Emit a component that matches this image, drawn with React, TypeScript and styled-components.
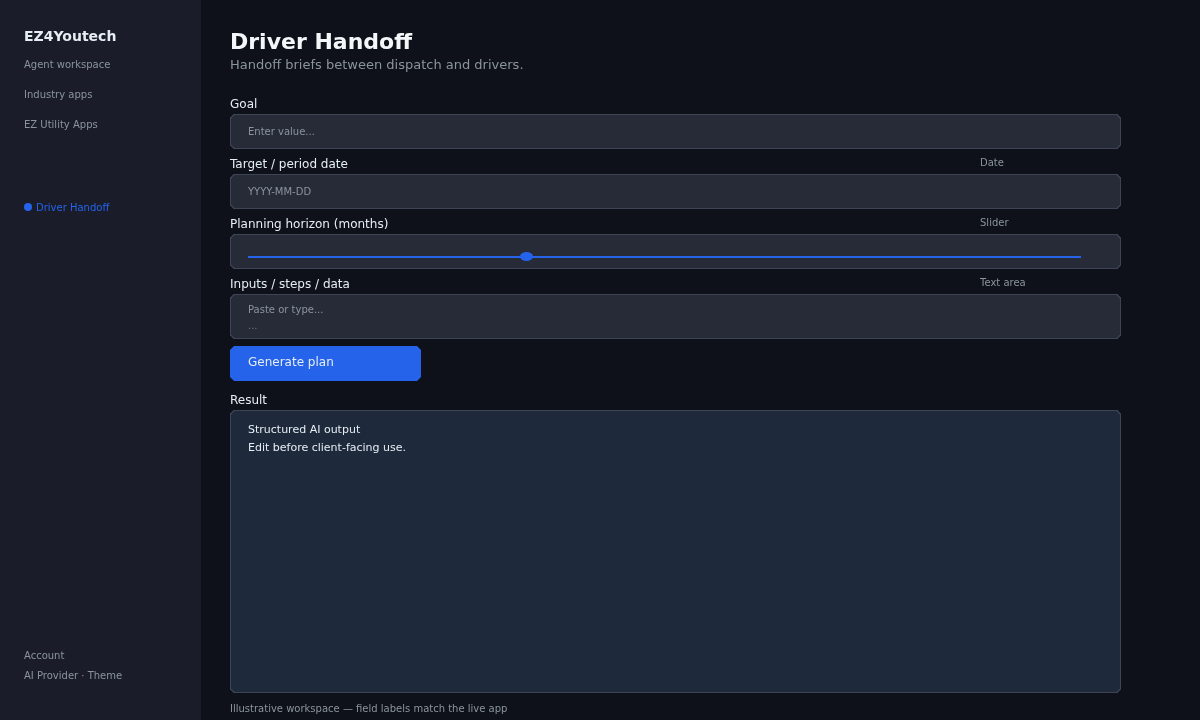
import React from "react";
import styled, { createGlobalStyle } from "styled-components";

const GlobalStyle = createGlobalStyle`
  html, body, #root {
    margin: 0;
    height: 100%;
  }
  body {
    background: #0e1119;
    font-family: "DejaVu Sans", sans-serif;
    overflow: hidden;
  }
`;

const fields = [
  { label: "Goal", placeholder: "Enter value..." },
  { label: "Target / period date", hint: "Date", placeholder: "YYYY-MM-DD" },
];

const App = () => {
  return (
    <Shell>
      <GlobalStyle />
      <Sidebar>
        <Brand>EZ4Youtech</Brand>
        <NavList>
          <NavItem>Agent workspace</NavItem>
          <NavItem>Industry apps</NavItem>
          <NavItem>EZ Utility Apps</NavItem>
        </NavList>
        <ActiveItem>
          <Dot />
          Driver Handoff
        </ActiveItem>
        <SidebarFooter>
          <span>Account</span>
          <span>AI Provider · Theme</span>
        </SidebarFooter>
      </Sidebar>
      <Main>
        <Title>Driver Handoff</Title>
        <Subtitle>Handoff briefs between dispatch and drivers.</Subtitle>
        <Form>
          {fields.map((f) => (
            <Field key={f.label}>
              <LabelRow>
                <Label>{f.label}</Label>
                {f.hint && <Hint>{f.hint}</Hint>}
              </LabelRow>
              <InputBox>{f.placeholder}</InputBox>
            </Field>
          ))}
          <Field>
            <LabelRow>
              <Label>Planning horizon (months)</Label>
              <Hint>Slider</Hint>
            </LabelRow>
            <SliderBox>
              <Track>
                <Thumb />
              </Track>
            </SliderBox>
          </Field>
          <Field>
            <LabelRow>
              <Label>Inputs / steps / data</Label>
              <Hint>Text area</Hint>
            </LabelRow>
            <TextBox>
              <span>Paste or type...</span>
              <Faint>...</Faint>
            </TextBox>
          </Field>
        </Form>
        <GenerateButton>Generate plan</GenerateButton>
        <ResultLabel>Result</ResultLabel>
        <ResultBox>
          <span>Structured AI output</span>
          <span>Edit before client-facing use.</span>
        </ResultBox>
        <Footnote>Illustrative workspace — field labels match the live app</Footnote>
      </Main>
    </Shell>
  );
};

export default App;

const Shell = styled.div`
  display: flex;
  width: 1200px;
  height: 720px;
  background: #0e1119;
  will-change: transform;
`;

const Sidebar = styled.aside`
  display: flex;
  flex-direction: column;
  flex: 0 0 201px;
  box-sizing: border-box;
  padding: 28px 0 38px 24px;
  background: #1a1d29;
  color: #8b949e;
  font-size: 10px;
`;

const Brand = styled.div`
  height: 16px;
  line-height: 17px;
  color: #e6edf3;
  font-size: 14px;
  font-weight: 700;
`;

const NavList = styled.nav`
  display: flex;
  flex-direction: column;
  gap: 18px;
  margin-top: 15px;
`;

const NavItem = styled.div`
  height: 12px;
  line-height: 12px;
`;

const ActiveItem = styled.div`
  display: flex;
  align-items: center;
  gap: 4px;
  height: 12px;
  margin-top: 70px;
  color: #2563eb;
`;

const Dot = styled.i`
  width: 8px;
  height: 8px;
  border-radius: 50%;
  background: #2563eb;
`;

const SidebarFooter = styled.div`
  display: flex;
  flex-direction: column;
  gap: 8px;
  margin-top: auto;
  line-height: 12px;
`;

const Main = styled.main`
  display: flex;
  flex-direction: column;
  flex: 1;
  box-sizing: border-box;
  padding: 29px 79px 0 29px;
`;

const Title = styled.h1`
  margin: 0;
  height: 26px;
  line-height: 26px;
  color: #f4f7fa;
  font-size: 22px;
  font-weight: 700;
`;

const Subtitle = styled.p`
  margin: 2px 0 0;
  height: 16px;
  line-height: 16px;
  color: #8b949e;
  font-size: 13px;
`;

const Form = styled.div`
  display: flex;
  flex-direction: column;
  gap: 5px;
  margin-top: 21px;
`;

const Field = styled.div`
  display: flex;
  flex-direction: column;
`;

const LabelRow = styled.div`
  display: flex;
  align-items: flex-start;
  justify-content: space-between;
  height: 20px;
`;

const Label = styled.label`
  line-height: 21px;
  color: #e6edf3;
  font-size: 12px;
`;

const Hint = styled.span`
  flex: 0 0 141px;
  line-height: 18px;
  color: #8b949e;
  font-size: 10px;
`;

const InputBox = styled.div`
  box-sizing: border-box;
  height: 35px;
  padding: 0 17px;
  border: 1px solid #3d4454;
  border-radius: 4px;
  corner-shape: bevel;
  background: #272b37;
  color: #8b949e;
  font-size: 10px;
  line-height: 33px;
`;

const SliderBox = styled(InputBox)`
  padding: 21px 39px 0 17px;
`;

const Track = styled.div`
  position: relative;
  height: 2px;
  background: #2563eb;
`;

const Thumb = styled.span`
  position: absolute;
  top: -4px;
  left: 272px;
  width: 13px;
  height: 9px;
  border-radius: 50%;
  background: #2563eb;
`;

const TextBox = styled(InputBox)`
  display: flex;
  flex-direction: column;
  gap: 4px;
  height: 45px;
  padding-top: 9px;
  line-height: 12px;
`;

const Faint = styled.span`
  color: #6b7280;
`;

const GenerateButton = styled.button`
  width: 191px;
  height: 35px;
  margin-top: 7px;
  padding: 0 18px 3px;
  border: 0;
  border-radius: 4px;
  corner-shape: bevel;
  background: #2563eb;
  color: #e6edf3;
  font-family: inherit;
  font-size: 12px;
  text-align: left;
`;

const ResultLabel = styled(Label)`
  display: block;
  height: 20px;
  margin-top: 9px;
`;

const ResultBox = styled.div`
  display: flex;
  flex-direction: column;
  gap: 6px;
  box-sizing: border-box;
  height: 283px;
  padding: 13px 17px;
  border: 1px solid #3d4454;
  border-radius: 4px;
  corner-shape: bevel;
  background: #1e293b;
  color: #e6edf3;
  font-size: 11px;
  line-height: 12px;
`;

const Footnote = styled.div`
  margin-top: 10px;
  line-height: 12px;
  color: #8b949e;
  font-size: 10px;
`;
